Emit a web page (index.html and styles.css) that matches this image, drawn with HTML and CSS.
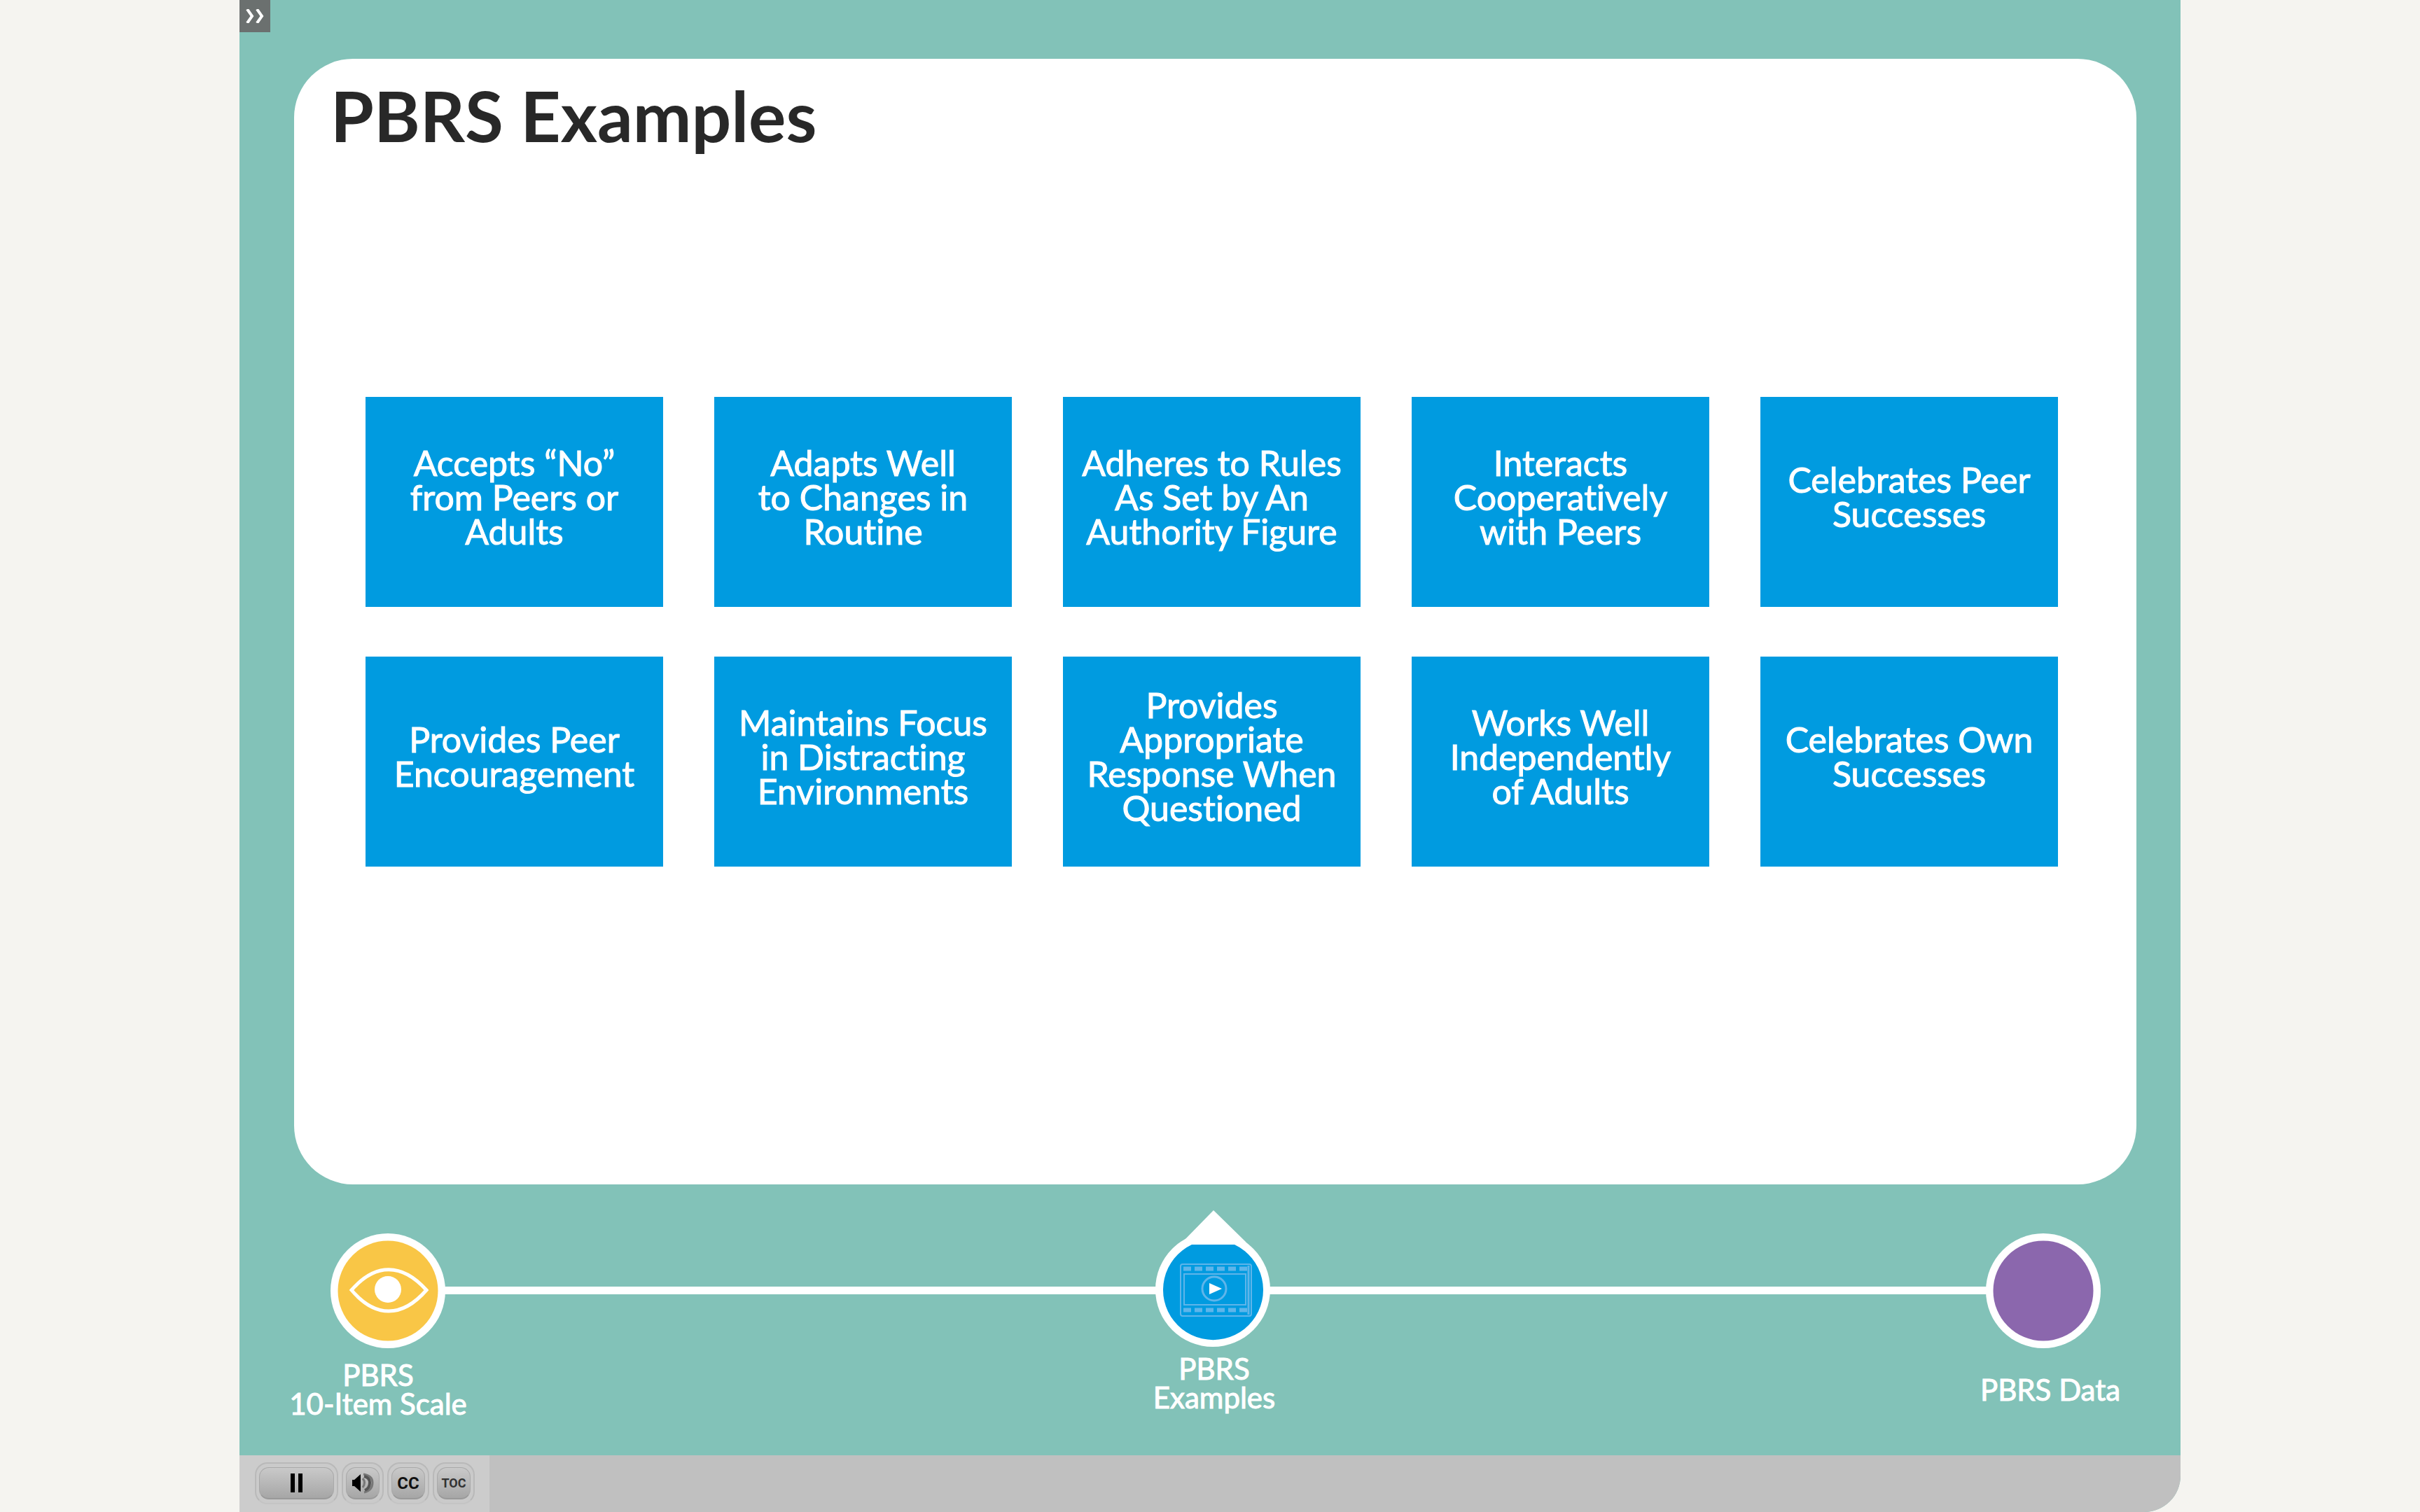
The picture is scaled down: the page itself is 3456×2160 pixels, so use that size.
FILE: index.html
```html
<!DOCTYPE html>
<html lang="en">
<head>
<meta charset="utf-8">
<title>PBRS Examples</title>
<meta name="viewport" content="width=device-width, initial-scale=1">
<link rel="stylesheet" href="styles.css">
</head>
<body>
<div class="player">
  <button class="toc-tab" type="button" aria-label="Show table of contents">
    <svg class="toc-tab-icon" viewBox="0 0 26 20" aria-hidden="true"><path d="M2 0l7 10-7 10M16 0l7 10-7 10"/></svg>
  </button>

  <main class="slide">
    <section class="card">
      <h1 class="title">PBRS Examples</h1>
      <div class="tiles">
        <button class="tile" type="button">Accepts “No”<br>from Peers or<br>Adults</button>
        <button class="tile" type="button">Adapts Well<br>to Changes in<br>Routine</button>
        <button class="tile" type="button">Adheres to Rules<br>As Set by An<br>Authority Figure</button>
        <button class="tile" type="button">Interacts<br>Cooperatively<br>with Peers</button>
        <button class="tile" type="button">Celebrates Peer<br>Successes</button>
        <button class="tile" type="button">Provides Peer<br>Encouragement</button>
        <button class="tile" type="button">Maintains Focus<br>in Distracting<br>Environments</button>
        <button class="tile" type="button">Provides<br>Appropriate<br>Response When<br>Questioned</button>
        <button class="tile" type="button">Works Well<br>Independently<br>of Adults</button>
        <button class="tile" type="button">Celebrates Own<br>Successes</button>
      </div>
    </section>

    <nav class="timeline" aria-label="Sections">
      <div class="track" aria-hidden="true">
        <svg class="marker" viewBox="0 0 164 164">
          <circle cx="82" cy="82" r="82" fill="#fff"/>
          <circle cx="82" cy="82" r="71.5" fill="#f9c646"/>
          <path d="M30 81C64 42 102 42 137 81C102 121 64 121 30 81Z" fill="none" stroke="#fff" stroke-width="5"/>
          <circle cx="82" cy="80" r="19" fill="#fff"/>
        </svg>
        <span class="line"></span>
        <svg class="marker marker-active" viewBox="0 0 164 197">
          <circle cx="82" cy="113" r="82" fill="#fff"/>
          <path d="M83 0L136 52L120 70H44L28 53Q36 48 41 43Z" fill="#fff"/>
          <path d="M52 49H113A71.5 71.5 0 1 1 52 49Z" fill="#009be0"/>
          <g fill="none" stroke="#5fb5ea" stroke-width="2">
            <rect x="36" y="77" width="101" height="74" rx="3"/>
            <path d="M133 79V149" stroke-width="3"/>
            <rect x="41" y="91" width="88" height="44"/>
            <path d="M40 83.500H135M40 142.500H135" stroke-width="6" stroke-dasharray="11 5"/>
            <circle cx="84" cy="112" r="17" stroke-width="3"/>
          </g>
          <path d="M77 104V120L95 112Z" fill="#fff"/>
        </svg>
        <span class="line"></span>
        <svg class="marker" viewBox="0 0 164 164">
          <circle cx="82" cy="82" r="82" fill="#fff"/>
          <circle cx="82" cy="82" r="71.500" fill="#8b67ad"/>
        </svg>
      </div>
      <div class="labels">
        <a class="label" href="#scale">PBRS<br>10-Item Scale</a>
        <a class="label label-active" href="#examples" aria-current="page">PBRS<br>Examples</a>
        <a class="label" href="#data">PBRS Data</a>
      </div>
    </nav>
  </main>

  <footer class="playbar">
    <div class="controls">
      <button class="control control-wide" type="button" aria-label="Pause">
        <span class="face"><svg class="icon" viewBox="0 0 32 32" aria-hidden="true"><path d="M7 2h6v27H7zM18 2h6v27h-6z" fill="#000"/></svg></span>
      </button>
      <button class="control" type="button" aria-label="Volume">
        <span class="face"><svg class="icon" viewBox="0 0 32 32" aria-hidden="true"><path d="M1 11H4L13 3V28L4 20H1Z" fill="#000"/><path d="M16 9Q21 15 16 22" fill="none" stroke="#777" stroke-width="3"/><path d="M17 3Q30 5 30 15Q30 26 18 29" fill="none" stroke="#777" stroke-width="3"/><path d="M18 6Q26 8 26 15Q26 23 19 26" fill="none" stroke="#555" stroke-width="4"/></svg></span>
      </button>
      <button class="control control-cc" type="button"><span class="face">CC</span></button>
      <button class="control control-toc" type="button"><span class="face">TOC</span></button>
    </div>
  </footer>
</div>
</body>
</html>
```
FILE: styles.css
```css
* {
  box-sizing: border-box;
}

body {
  margin: 0;
  background: #f5f4f0;
  font-family: Lato, "Open Sans", sans-serif;
  font-variant-ligatures: none;
}

button {
  margin: 0;
  padding: 0;
  border: 0;
  font: inherit;
  font-variant-ligatures: none;
  color: inherit;
  cursor: pointer;
}

.player {
  position: relative;
  display: flex;
  flex-direction: column;
  max-width: 2772px;
  min-height: 100vh;
  margin: 0 auto;
  background: #82c2b8;
  border-bottom-right-radius: 52px;
  overflow: hidden;
}

.toc-tab {
  position: absolute;
  top: 0;
  left: 0;
  display: flex;
  align-items: center;
  justify-content: center;
  width: 44px;
  height: 46px;
  background: #6b706f;
}

.toc-tab-icon {
  width: 26px;
  height: 20px;
  fill: none;
  stroke: #fff;
  stroke-width: 4;
}

.slide {
  flex: 1;
  display: flex;
  flex-direction: column;
  padding-top: 84px;
}

.card {
  flex: 1;
  margin: 0 63px 0 78px;
  padding: 24px 112px 48px 102px;
  background: #fff;
  border-radius: 84px;
}

.title {
  margin: 0 0 347px -50px;
  font-size: 100px;
  line-height: 112px;
  font-weight: 700;
  color: #282828;
}

.tiles {
  display: grid;
  grid-template-columns: repeat(5, 1fr);
  gap: 71px 73px;
}

.tile {
  min-height: 300px;
  padding-bottom: 14px;
  background: #009be0;
  color: #fff;
  font-size: 50px;
  line-height: 49px;
  text-align: center;
  -webkit-text-stroke: 1px #fff;
}

.timeline {
  padding: 37px 58px 44px 70px;
}

.track {
  display: grid;
  grid-template-columns: 164px 125fr 164px 126fr 164px;
  align-items: end;
  margin: 0 56px 9px 60px;
}

.marker {
  display: block;
  width: 164px;
  height: 164px;
}

.marker-active {
  height: 197px;
}

.line {
  height: 11px;
  margin: 0 -4px 77px;
  background: #fff;
}

.labels {
  display: flex;
  justify-content: space-between;
  align-items: center;
}

.label {
  width: 256px;
  color: #fff;
  font-size: 42px;
  line-height: 41px;
  text-align: center;
  text-decoration: none;
  white-space: nowrap;
  -webkit-text-stroke: 1px #fff;
}

.label-active {
  padding-bottom: 18px;
}

.playbar {
  display: flex;
  background: #c0c0c0;
}

.controls {
  display: flex;
  gap: 5px;
  padding: 10px 21px 11px 22px;
  background: #ccc;
}

.control {
  display: flex;
  width: 60px;
  height: 60px;
  padding: 5px 4px;
  background: #cacaca;
  border: 2px solid #b9b9b9;
  border-bottom-color: #c4c4c4;
  border-radius: 18px;
}

.control-wide {
  width: 119px;
}

.face {
  flex: 1;
  display: flex;
  align-items: center;
  justify-content: center;
  background: linear-gradient(#c9c9c9, #a6a6a6);
  border: 1px solid #a9a9a9;
  border-bottom: 2px solid #999;
  border-radius: 14px;
  font-family: Roboto, "Liberation Sans", sans-serif;
  font-weight: 700;
}

.icon {
  width: 32px;
  height: 32px;
}

.control-cc {
  color: #111;
  font-size: 24px;
}

.control-toc {
  color: #333;
  font-size: 18px;
}
```
